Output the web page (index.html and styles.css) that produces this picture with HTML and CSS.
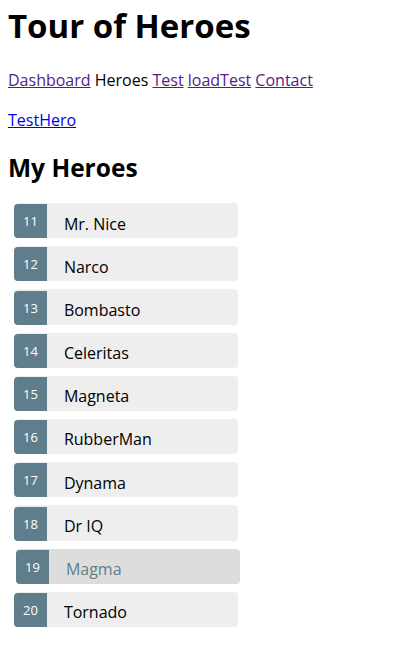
FILE: index.html
```html
<!DOCTYPE html>
<html>
<head>
<meta charset="utf-8">
<link rel="stylesheet" href="styles.css">
</head>
<body>
<h1 class="title">Tour of Heroes</h1>
<nav class="nav">
  <a class="visited" href="#">Dashboard</a> <span>Heroes</span> <a class="visited" href="#">Test</a> <a class="visited" href="#">loadTest</a> <a class="visited" href="#">Contact</a>
</nav>
<p class="testhero"><a class="fresh" href="#">TestHero</a></p>
<h2 class="subtitle">My Heroes</h2>
<ul class="heroes">
  <li class="hero"><span class="badge">11</span><span class="name">Mr. Nice</span></li>
  <li class="hero"><span class="badge">12</span><span class="name">Narco</span></li>
  <li class="hero"><span class="badge">13</span><span class="name">Bombasto</span></li>
  <li class="hero"><span class="badge">14</span><span class="name">Celeritas</span></li>
  <li class="hero"><span class="badge">15</span><span class="name">Magneta</span></li>
  <li class="hero"><span class="badge">16</span><span class="name">RubberMan</span></li>
  <li class="hero"><span class="badge">17</span><span class="name">Dynama</span></li>
  <li class="hero"><span class="badge">18</span><span class="name">Dr IQ</span></li>
  <li class="hero hover"><span class="badge">19</span><span class="name">Magma</span></li>
  <li class="hero"><span class="badge">20</span><span class="name">Tornado</span></li>
</ul>
</body>
</html>
```
FILE: styles.css
```css
html, body {
  margin: 0;
  padding: 0;
  background: #fff;
}
body {
  padding: 0 8px;
  font-family: "Open Sans", "Noto Sans", sans-serif;
  font-size: 16px;
  color: #000;
}
.title {
  font-size: 33px;
  font-weight: bold;
  margin: 0;
  padding-top: 4px;
  line-height: 44px;
}
.nav {
  margin-top: 21px;
  line-height: 22px;
}
.visited { color: #551a8b; }
.fresh { color: #0000ee; }
.testhero {
  margin: 18px 0 0;
  line-height: 22px;
}
.subtitle {
  font-size: 24.5px;
  font-weight: bold;
  margin: 20.5px 0 0;
  line-height: 32px;
}
.heroes {
  list-style: none;
  margin: 19.5px 0 0 6px;
  padding: 0;
  width: 224px;
  display: flex;
  flex-direction: column;
  gap: 8px;
}
.hero {
  height: 35.2px;
  background: #eee;
  border-radius: 4px;
  display: flex;
  align-items: flex-end;
  position: relative;
}
.hero.hover {
  background: #ddd;
  color: #607d8b;
  left: 2px;
}
.badge {
  box-sizing: border-box;
  height: 34px;
  padding: 0 9px;
  line-height: 34px;
  font-size: 13px;
  color: #fff;
  background: #607d8b;
  border-radius: 4px 0 0 4px;
  margin-right: 17px;
}
.name {
  align-self: flex-start;
  padding-top: 9.5px;
  line-height: 22px;
}
```
